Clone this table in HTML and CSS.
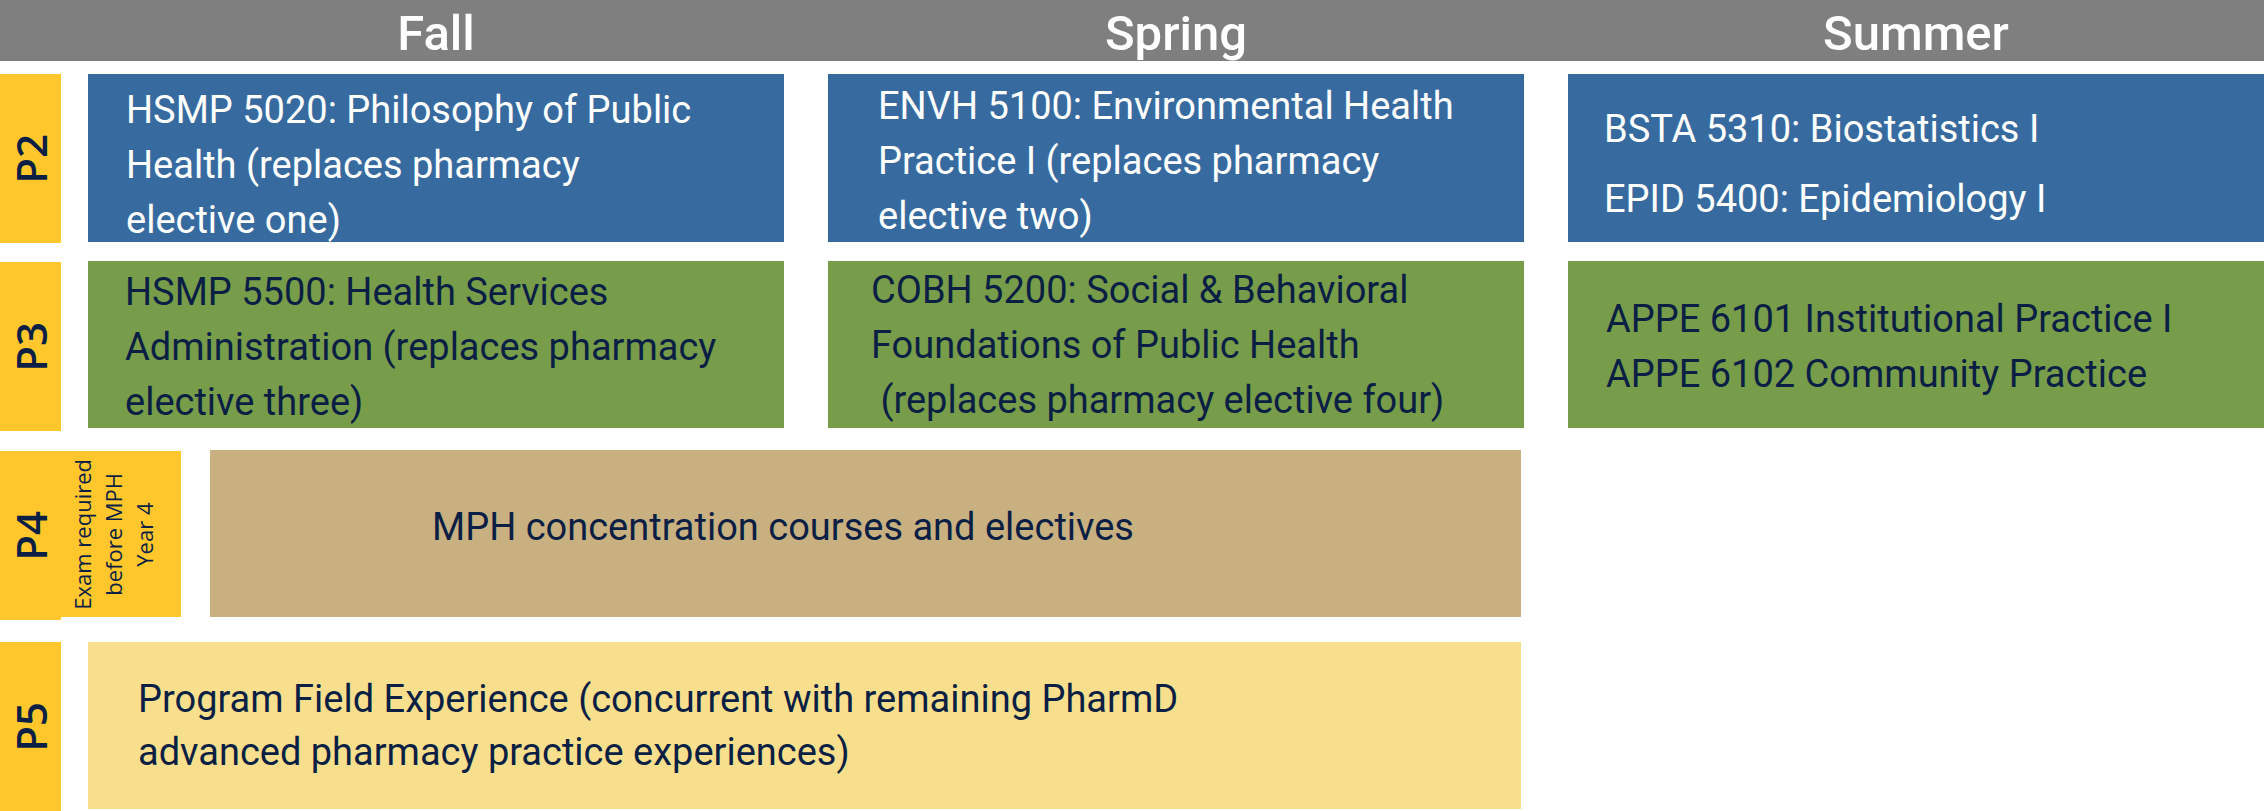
FILE: index.html
```html
<!DOCTYPE html>
<html lang="en">
<head>
<meta charset="utf-8">
<title>PharmD / MPH plan of study</title>
<link rel="stylesheet" href="styles.css">
</head>
<body>
<div class="sheet">
  <div class="terms">
    <div class="term">Fall</div>
    <div class="term">Spring</div>
    <div class="term">Summer</div>
  </div>

  <div class="row r2">
    <div class="year"><span>P2</span></div>
    <div class="course blue p2-fall">HSMP 5020: Philosophy of Public<br>Health (replaces pharmacy<br>elective one)</div>
    <div class="course blue p2-spring">ENVH 5100: Environmental Health<br>Practice I (replaces pharmacy<br>elective two)</div>
    <div class="course blue p2-summer"><p>BSTA 5310: Biostatistics I</p><p>EPID 5400: Epidemiology I</p></div>
  </div>

  <div class="row r3">
    <div class="year"><span>P3</span></div>
    <div class="course green p3-fall">HSMP 5500: Health Services<br>Administration (replaces pharmacy<br>elective three)</div>
    <div class="course green p3-spring">COBH 5200: Social &amp; Behavioral<br>Foundations of Public Health<br>&nbsp;(replaces pharmacy elective four)</div>
    <div class="course green p3-summer">APPE 6101 Institutional Practice I<br>APPE 6102 Community Practice</div>
  </div>

  <div class="row r4">
    <div class="year-wide">
      <div class="tag"><span>P4</span></div>
      <div class="note"><span>Exam required<br>before MPH<br>Year 4</span></div>
    </div>
    <div class="course tan">MPH concentration courses and electives</div>
  </div>

  <div class="row r5">
    <div class="year"><span>P5</span></div>
    <div class="course pale">Program Field Experience (concurrent with remaining PharmD<br>advanced pharmacy practice experiences)</div>
  </div>
</div>
</body>
</html>
```

FILE: styles.css
```css
html, body {
  margin: 0;
  padding: 0;
  background: #ffffff;
}

body {
  font-family: Roboto, "Liberation Sans", Arial, sans-serif;
  color: #0b1f44;
  overflow: hidden;
}

.sheet {
  width: 2264px;
  height: 811px;
}

/* term header bar */
.terms {
  display: flex;
  gap: 44px;
  height: 61px;
  padding-left: 88px;
  background: #7f7f7f;
  box-sizing: border-box;
}

.term {
  width: 696px;
  flex: none;
  text-align: center;
  color: #ffffff;
  font-size: 49px;
  font-weight: 500;
  line-height: 55px;
  padding-top: 6px;
}

/* rows */
.row {
  display: flex;
  align-items: flex-start;
}

.r2 { margin-top: 13px; }
.r3 { margin-top: 18px; }
.r4 { margin-top: 19px; }
.r5 { margin-top: 22px; }

.year,
.tag {
  width: 61px;
  flex: none;
  background: #ffc72c;
  display: flex;
  align-items: center;
  justify-content: center;
}

.year span,
.tag span {
  writing-mode: vertical-rl;
  transform: rotate(180deg);
  font-family: "Open Sans", "DejaVu Sans", sans-serif;
  font-weight: 600;
  font-size: 42px;
  line-height: 1;
  color: #0b1f44;
}

.r2 .year { height: 169px; }
.r3 .year { height: 169px; margin-top: 1px; }
.r5 .year { height: 169px; }

.year-wide {
  display: flex;
  align-items: flex-start;
  margin-top: 1px;
  flex: none;
}

.tag { height: 169px; }

.note {
  width: 120px;
  height: 166px;
  background: #ffc72c;
  display: flex;
  align-items: center;
  justify-content: flex-start;
  padding-left: 6px;
  box-sizing: border-box;
}

.note span {
  writing-mode: vertical-rl;
  transform: rotate(180deg);
  font-family: "Open Sans", "DejaVu Sans", sans-serif;
  font-size: 22px;
  line-height: 31px;
  text-align: center;
  color: #0b1f44;
}

/* course boxes */
.course {
  flex: none;
  width: 696px;
  box-sizing: border-box;
  font-size: 38px;
  line-height: 55px;
  white-space: nowrap;
}

.course p {
  margin: 0;
}

.course p + p {
  margin-top: 15px;
}

.r2 .course { height: 168px; }
.r3 .course { height: 167px; }

.r2 .course:nth-child(2),
.r3 .course:nth-child(2) { margin-left: 27px; }

.r2 .course + .course,
.r3 .course + .course { margin-left: 44px; }

.blue {
  background: #376ba0;
  color: #ffffff;
}

.green {
  background: #779c4a;
  color: #0b1f44;
}

.tan {
  background: #c9b080;
  color: #0b1f44;
}

.pale {
  background: #f8df8d;
  color: #0b1f44;
}

.p2-fall   { padding: 9px 0 0 38px; }
.p2-spring { padding: 5px 0 0 50px; }
.p2-summer { padding: 28px 0 0 36px; }

.p3-fall   { padding: 4px 0 0 37px; }
.p3-spring { padding: 2px 0 0 43px; }
.p3-summer { padding: 31px 0 0 38px; }

.r4 .tan {
  width: 1311px;
  height: 167px;
  margin-left: 29px;
  padding: 50px 0 0 222px;
}

.r5 .pale {
  width: 1433px;
  height: 167px;
  margin-left: 27px;
  padding: 31px 0 0 50px;
  line-height: 53px;
}
```
